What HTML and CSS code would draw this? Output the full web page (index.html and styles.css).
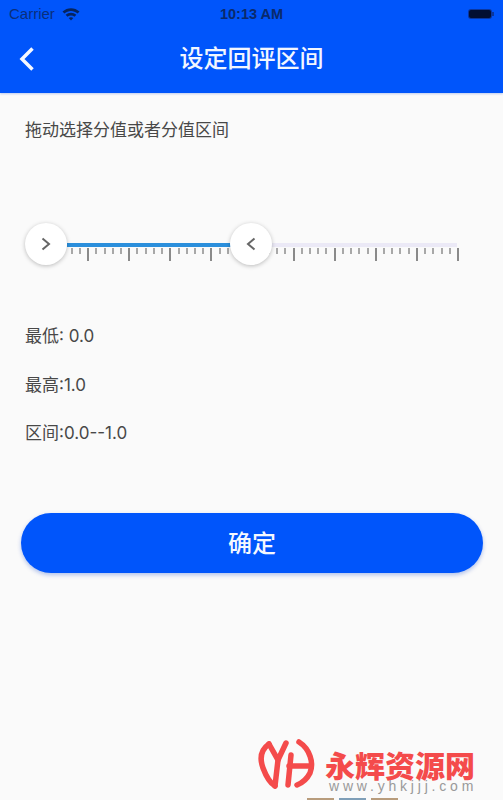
FILE: index.html
```html
<!DOCTYPE html>
<html lang="zh-CN">
<head>
    <meta charset="UTF-8">
    <meta name="viewport" content="width=device-width, initial-scale=1.0">
    <title>设定回评区间</title>
    <link rel="stylesheet" href="styles.css">
</head>
<body>
    <header class="app-header">
        <div class="status-bar">
            <div class="status-left">
                <span>Carrier</span>
                <svg class="wifi" width="18" height="14" viewBox="0 0 18 14">
                    <path d="M0.5 4.6C5.3 0 12.7 0 17.5 4.6L15.6 6.6C11.8 3 6.2 3 2.4 6.6Z"/>
                    <path d="M3.6 7.8C6.7 4.9 11.3 4.9 14.4 7.8L12.5 9.8C10.5 8 7.5 8 5.5 9.8Z"/>
                    <path d="M6.7 11C8 9.9 10 9.9 11.3 11L9 13.5Z"/>
                </svg>
            </div>
            <span class="status-time">10:13 AM</span>
            <div class="battery"><div class="battery-fill"></div><div class="battery-nub"></div></div>
        </div>
        <div class="nav-bar">
            <svg class="back-icon" width="16" height="26" viewBox="0 0 16 26">
                <path d="M13.5 2.5L3 13L13.5 23.5"/>
            </svg>
            <h1>设定回评区间</h1>
        </div>
    </header>

    <main class="content">
        <p class="hint">拖动选择分值或者分值区间</p>

        <div class="slider">
            <div class="track">
                <div class="track-active"></div>
            </div>
            <div class="ticks"></div>
            <div class="thumb thumb-low">
                <svg width="12" height="14" viewBox="0 0 12 14"><path d="M2.5 1.5L9 7L2.5 12.5"/></svg>
            </div>
            <div class="thumb thumb-high">
                <svg width="12" height="14" viewBox="0 0 12 14"><path d="M9.5 1.5L3 7L9.5 12.5"/></svg>
            </div>
        </div>

        <div class="values">
            <p>最低: 0.0</p>
            <p>最高:1.0</p>
            <p>区间:0.0--1.0</p>
        </div>

        <button class="confirm-btn">确定</button>
    </main>

    <!-- site watermark -->
    <div class="watermark">
        <svg class="wm-logo" width="70" height="60" viewBox="0 0 70 60">
            <path d="M19 9C12 14 9 22 13 33C16 41 20 48 25 51"/>
            <path d="M19 9L28 25L36 8"/>
            <path d="M28 25L25 51"/>
            <path d="M41 20L38 50"/>
            <path d="M39 31H60"/>
            <path d="M49 7C60 14 64 28 60 38C57 44 52 48 47 50"/>
        </svg>
        <div class="wm-text">
            <div class="wm-name">永辉资源网</div>
            <div class="wm-url">www.yhkjjj.com</div>
        </div>
    </div>
    <div class="wm-strip">
        <span class="strip-tan"></span>
        <span class="strip-blue"></span>
        <span class="strip-tan"></span>
    </div>
</body>
</html>
```

FILE: styles.css
```css
* {
    box-sizing: border-box;
}
body {
    position: relative;
    margin: 0;
    height: 800px;
    overflow: hidden;
    background-color: #fafafa;
    color: #484848;
    font-family: "Noto Sans CJK SC", "Liberation Sans", sans-serif;
}
.app-header {
    height: 93px;
    background-color: #0055fb;
    box-shadow: 0 1px 2px rgba(0,60,200,0.25);
}
.status-bar {
    display: flex;
    align-items: center;
    justify-content: space-between;
    height: 27px;
    padding: 0 9px 0 9px;
    color: #0a2f7c;
    font-family: "Liberation Sans", sans-serif;
    font-size: 15px;
}
.status-left {
    display: flex;
    align-items: center;
    gap: 7px;
    width: 100px;
}
.wifi {
    fill: #06245f;
}
.status-time {
    font-weight: bold;
    font-size: 14.5px;
    color: #0a2a6c;
}
.battery {
    display: flex;
    align-items: center;
    justify-content: flex-end;
    width: 100px;
}
.battery-fill {
    width: 22px;
    height: 8px;
    border-radius: 2px;
    background-color: #020f33;
    box-shadow: 0 0 0 1px #0a36a0;
}
.battery-nub {
    width: 2px;
    height: 4px;
    margin-left: 1px;
    background-color: #0a36a0;
}
.nav-bar {
    position: relative;
    height: 66px;
    padding-bottom: 6px;
    display: flex;
    align-items: center;
    justify-content: center;
}
.nav-bar h1 {
    margin: 0;
    color: #f2f6ff;
    font-size: 24px;
    font-weight: 500;
    line-height: 34px;
}
.back-icon {
    position: absolute;
    left: 19px;
    top: 19px;
    fill: none;
    stroke: #f5f8ff;
    stroke-width: 3.5;
}
.content {
    padding: 0 21px;
}
.hint {
    margin: 24px 0 0 4px;
    font-size: 17px;
    line-height: 24px;
}

/* slider */
.slider {
    position: relative;
    height: 45px;
    margin: 81px 4px 0;
    padding: 21px 21px 0 42px;
}
.track {
    height: 4px;
    background-color: #ebe9f6;
}
.track-active {
    width: 165px;
    height: 4px;
    background-color: #2b8fdc;
}
.ticks {
    position: absolute;
    left: 21px;
    top: 26px;
    width: 413px;
    height: 13px;
    background-image:
        repeating-linear-gradient(90deg, #8a8a8a 0 2px, transparent 2px 41.1px),
        repeating-linear-gradient(90deg, #a8a8a8 0 2px, transparent 2px 8.22px);
    background-size: 100% 13px, 100% 6px;
    background-repeat: no-repeat;
}
.thumb {
    position: absolute;
    top: 1px;
    display: flex;
    align-items: center;
    justify-content: center;
    width: 42px;
    height: 42px;
    border-radius: 50%;
    background-color: white;
    box-shadow: 0 1px 4px rgba(0,0,0,0.25);
}
.thumb svg {
    fill: none;
    stroke: #666;
    stroke-width: 2;
}
.thumb-low {
    left: 0;
}
.thumb-high {
    left: 205px;
}

.values {
    margin: 57px 0 0 4px;
    font-family: Inter, "Noto Sans CJK SC", sans-serif;
    font-size: 17px;
    line-height: 24px;
}
.values p {
    margin: 0 0 24.5px;
}
.confirm-btn {
    display: block;
    width: 462px;
    height: 60px;
    margin-top: 68px;
    padding: 0 0 4px;
    border: none;
    border-radius: 30px;
    background-color: #0055fb;
    color: #f5f8ff;
    font-family: inherit;
    font-size: 24px;
    font-weight: 500;
    box-shadow: 0 2px 4px rgba(0,60,200,0.3);
}

/* watermark */
.watermark {
    position: absolute;
    left: 250px;
    top: 735px;
    display: flex;
    gap: 5px;
}
.wm-logo {
    fill: none;
    stroke: #f44b4b;
    stroke-width: 5.5;
    stroke-linecap: round;
}
.wm-text {
    width: 178px;
    padding-top: 14px;
}
.wm-name {
    color: #f44b4b;
    font-size: 30px;
    font-weight: 900;
    line-height: 30px;
    white-space: nowrap;
}
.wm-url {
    margin-left: 4px;
    color: #999;
    font-family: "Liberation Sans", sans-serif;
    font-size: 14px;
    letter-spacing: 3.8px;
    line-height: 14px;
    white-space: nowrap;
}
.wm-strip {
    position: absolute;
    left: 307px;
    top: 798px;
    display: flex;
    gap: 5px;
}
.wm-strip span {
    width: 27px;
    height: 2px;
}
.strip-tan {
    background-color: #b89c7c;
}
.strip-blue {
    background-color: #7f9fb8;
}
```
